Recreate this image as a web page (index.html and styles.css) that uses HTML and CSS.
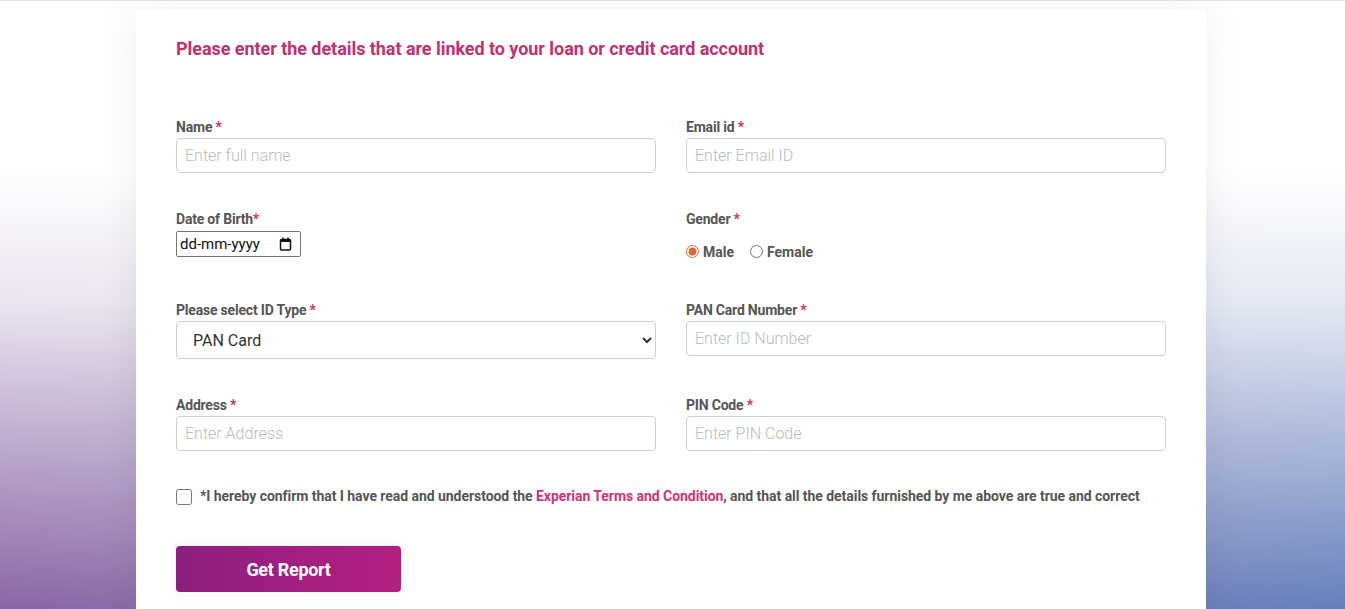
FILE: index.html
```html
<!DOCTYPE html>
<html lang="en">
<head>
<meta charset="utf-8">
<title>Experian Report</title>
<link rel="stylesheet" href="styles.css">
</head>
<body>
<div class="topline"></div>
<main class="page">
  <section class="card">
    <h1 class="title">Please enter the details that are linked to your loan or credit card account</h1>
    <form class="form">
      <div class="grid">
        <div class="field">
          <label class="label">Name <span class="req">*</span></label>
          <input class="input" type="text" placeholder="Enter full name">
        </div>
        <div class="field">
          <label class="label">Email id <span class="req">*</span></label>
          <input class="input" type="text" placeholder="Enter Email ID">
        </div>
        <div class="field">
          <label class="label">Date of Birth<span class="req">*</span></label>
          <div class="date">
            <span class="date-text">dd-mm-yyyy</span>
            <svg class="cal" width="13" height="14" viewBox="0 0 13 14" aria-hidden="true">
              <rect x="1.5" y="2.5" width="10" height="10.5" rx="1" fill="none" stroke="#111" stroke-width="1.5"/>
              <rect x="1.5" y="2.5" width="10" height="2.5" fill="#111"/>
              <rect x="3.2" y="0.5" width="1.6" height="2.5" fill="#111"/>
              <rect x="8.2" y="0.5" width="1.6" height="2.5" fill="#111"/>
            </svg>
          </div>
        </div>
        <div class="field">
          <label class="label">Gender <span class="req">*</span></label>
          <div class="radios">
            <label class="radio"><input type="radio" name="g" checked> Male</label>
            <label class="radio"><input type="radio" name="g"> Female</label>
          </div>
        </div>
        <div class="field">
          <label class="label">Please select ID Type <span class="req">*</span></label>
          <select class="select"><option>PAN Card</option></select>
        </div>
        <div class="field">
          <label class="label">PAN Card Number <span class="req">*</span></label>
          <input class="input" type="text" placeholder="Enter ID Number">
        </div>
        <div class="field">
          <label class="label">Address <span class="req">*</span></label>
          <input class="input" type="text" placeholder="Enter Address">
        </div>
        <div class="field">
          <label class="label">PIN Code <span class="req">*</span></label>
          <input class="input" type="text" placeholder="Enter PIN Code">
        </div>
      </div>
      <label class="consent"><input class="check" type="checkbox"><span>*I hereby confirm that I have read and understood the <a class="link" href="#">Experian Terms and Condition</a>, and that all the details furnished by me above are true and correct</span></label>
      <button class="btn" type="button">Get Report</button>
    </form>
  </section>
</main>
</body>
</html>
```
FILE: styles.css
```css
* { box-sizing: border-box; }
html, body { margin: 0; height: 100%; }
body {
  font-family: Roboto, "Liberation Sans", Arial, sans-serif;
  background:
    linear-gradient(to bottom, #ffffff 28%, rgba(255,255,255,0.82) 50%, rgba(255,255,255,0) 100%),
    linear-gradient(to right, #8a66a6 0%, #8a6ea8 15%, #7c7cb6 60%, #6680bc 100%);
  overflow: hidden;
}
.topline { height: 2px; border-top: 1px solid #e4e4e4; }
.page { display: flex; justify-content: flex-start; padding: 8px 0 0 136px; }
.card {
  width: 1070px;
  background: #fff;
  border-radius: 4px 4px 0 0;
  box-shadow: 0 0 40px rgba(0,0,0,0.07);
  padding: 28px 40px 40px;
  min-height: 620px;
}
.title {
  margin: 0;
  font-size: 18px;
  line-height: 22px;
  font-weight: 700;
  color: #c1306f;
  letter-spacing: -0.05px;
}
.form { margin-top: 59px; width: 990px; }
.grid {
  display: grid;
  grid-template-columns: 480px 480px;
  column-gap: 30px;
  row-gap: 38px;
}
.field { display: flex; flex-direction: column; align-items: flex-start; }
.label {
  font-size: 14px;
  line-height: 17px;
  font-weight: 700;
  color: #555;
  margin-bottom: 2px;
  letter-spacing: -0.2px;
}
.req { color: #d0305a; }
.input {
  width: 480px;
  height: 35px;
  border: 1px solid #cfcfcf;
  border-radius: 4px;
  padding: 0 8px;
  font-family: Roboto, sans-serif;
  font-size: 16px;
  color: #333;
  background: #fff;
  outline: none;
}
.input::placeholder { color: #bbbbbb; font-weight: 300; }
.date {
  margin-top: 1px;
  width: 125px;
  height: 26px;
  border: 1px solid #767676;
  border-radius: 2px;
  display: flex;
  align-items: center;
  justify-content: space-between;
  padding: 0 8px 0 3px;
  background: #fff;
}
.date-text {
  font-family: Roboto, "Liberation Sans", sans-serif;
  font-size: 15px;
  color: #111;
}
.cal { display: block; }
.radios { display: flex; gap: 16px; margin: 12px 0 3px; height: 19px; align-items: center; }
.radio {
  display: flex; align-items: center; gap: 4px;
  font-size: 14px; font-weight: 700; color: #555;
}
.radio input { margin: 0; width: 13px; height: 13px; accent-color: #d96b2e; }
.select {
  width: 480px;
  height: 38px;
  border: 1px solid #cfcfcf;
  border-radius: 4px;
  padding: 0 12px;
  font-family: Roboto, sans-serif;
  font-size: 16px;
  color: #333;
  background: #fff;
}
.consent {
  display: flex;
  align-items: center;
  gap: 8px;
  margin-top: 36px;
  font-size: 14px;
  font-weight: 700;
  color: #555;
  letter-spacing: -0.05px;
}
.check { margin: 2px 0 0; width: 16px; height: 16px; accent-color: #b0207d; }
.link { color: #d6307a; text-decoration: none; }
.btn {
  margin-top: 41px;
  width: 225px;
  height: 46px;
  border: none;
  border-radius: 4px;
  background: linear-gradient(to right, #8c1f7e, #b51f82);
  color: #fff;
  font-family: Roboto, sans-serif;
  font-size: 18px;
  font-weight: 700;
  letter-spacing: -0.3px;
  box-shadow: 0 0 12px rgba(180,30,120,0.08);
}
```
